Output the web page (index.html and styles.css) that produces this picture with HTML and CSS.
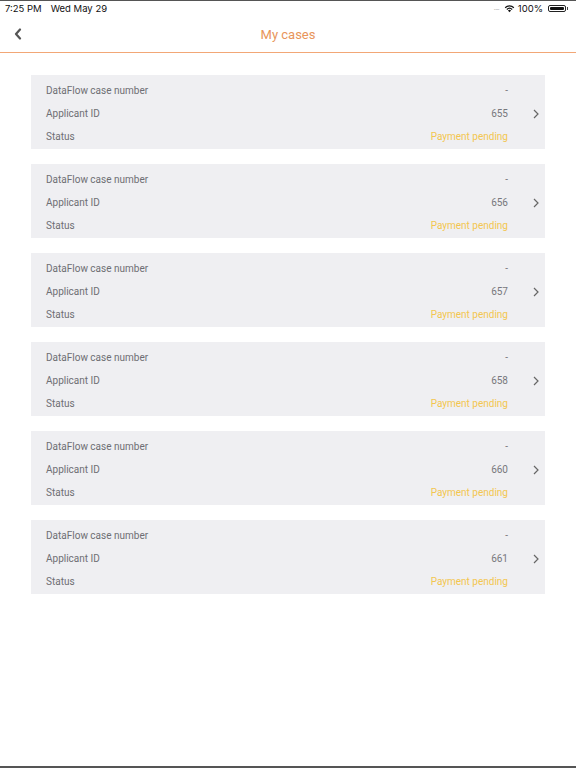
FILE: index.html
```html
<!DOCTYPE html>
<html>
<head>
<meta charset="utf-8">
<link rel="stylesheet" href="styles.css">
</head>
<body>
<div class="screen">
  <div class="statusbar">
    <div class="sb-left"><span>7:25 PM</span><span>Wed May 29</span></div>
    <div class="sb-right">
      <span class="dots">····</span>
      <svg class="wifi" width="11" height="9" viewBox="0 0 12 9"><path d="M6 8.6L4.3 6.7a2.5 2.5 0 0 1 3.4 0z" fill="#111"/><path d="M2.6 5a4.9 4.9 0 0 1 6.8 0l-0.9 1a3.6 3.6 0 0 0-5 0z" fill="#111"/><path d="M0.8 3.1a7.5 7.5 0 0 1 10.4 0l-0.9 1a6.2 6.2 0 0 0-8.6 0z" fill="#111"/></svg>
      <span>100%</span>
      <span class="battery"><span class="fill"></span></span><span class="nub"></span>
    </div>
  </div>
  <div class="navbar">
    <svg class="back" width="8" height="12" viewBox="0 0 8 12"><path d="M6 1.5L2 6l4 4.5" fill="none" stroke="#555" stroke-width="2.2" stroke-linecap="round" stroke-linejoin="round"/></svg>
    <div class="title">My cases</div>
  </div>
  <div class="list">
    <div class="card"><div class="rows"><div class="row"><span>DataFlow case number</span><span class="val">-</span></div><div class="row"><span>Applicant ID</span><span class="val">655</span></div><div class="row"><span>Status</span><span class="status">Payment pending</span></div></div><div class="chev"><svg width="6" height="10" viewBox="0 0 6 10"><path d="M1 1l4 4-4 4" fill="none" stroke="#666" stroke-width="1.2"/></svg></div></div>
    <div class="card"><div class="rows"><div class="row"><span>DataFlow case number</span><span class="val">-</span></div><div class="row"><span>Applicant ID</span><span class="val">656</span></div><div class="row"><span>Status</span><span class="status">Payment pending</span></div></div><div class="chev"><svg width="6" height="10" viewBox="0 0 6 10"><path d="M1 1l4 4-4 4" fill="none" stroke="#666" stroke-width="1.2"/></svg></div></div>
    <div class="card"><div class="rows"><div class="row"><span>DataFlow case number</span><span class="val">-</span></div><div class="row"><span>Applicant ID</span><span class="val">657</span></div><div class="row"><span>Status</span><span class="status">Payment pending</span></div></div><div class="chev"><svg width="6" height="10" viewBox="0 0 6 10"><path d="M1 1l4 4-4 4" fill="none" stroke="#666" stroke-width="1.2"/></svg></div></div>
    <div class="card"><div class="rows"><div class="row"><span>DataFlow case number</span><span class="val">-</span></div><div class="row"><span>Applicant ID</span><span class="val">658</span></div><div class="row"><span>Status</span><span class="status">Payment pending</span></div></div><div class="chev"><svg width="6" height="10" viewBox="0 0 6 10"><path d="M1 1l4 4-4 4" fill="none" stroke="#666" stroke-width="1.2"/></svg></div></div>
    <div class="card"><div class="rows"><div class="row"><span>DataFlow case number</span><span class="val">-</span></div><div class="row"><span>Applicant ID</span><span class="val">660</span></div><div class="row"><span>Status</span><span class="status">Payment pending</span></div></div><div class="chev"><svg width="6" height="10" viewBox="0 0 6 10"><path d="M1 1l4 4-4 4" fill="none" stroke="#666" stroke-width="1.2"/></svg></div></div>
    <div class="card"><div class="rows"><div class="row"><span>DataFlow case number</span><span class="val">-</span></div><div class="row"><span>Applicant ID</span><span class="val">661</span></div><div class="row"><span>Status</span><span class="status">Payment pending</span></div></div><div class="chev"><svg width="6" height="10" viewBox="0 0 6 10"><path d="M1 1l4 4-4 4" fill="none" stroke="#666" stroke-width="1.2"/></svg></div></div>
  </div>
  <div class="spacer"></div>
</div>
</body>
</html>
```

FILE: styles.css
```css
html, body {
  margin: 0;
  padding: 0;
  background: #fff;
}
.screen {
  width: 576px;
  height: 768px;
  box-sizing: border-box;
  border-top: 1px solid #555;
  border-bottom: 2px solid #555;
  display: flex;
  flex-direction: column;
  font-family: "Roboto", "Liberation Sans", sans-serif;
  background: #fff;
}
.statusbar {
  height: 15px;
  display: flex;
  justify-content: space-between;
  align-items: center;
  padding: 0 8px 0 5px;
  font-size: 9.5px;
  color: #111;
  font-family: "Inter", "Liberation Sans", sans-serif;
}
.sb-left {
  display: flex;
  gap: 9px;
}
.sb-right {
  display: flex;
  align-items: center;
  gap: 3px;
}
.dots {
  color: #bbb;
  font-size: 8px;
  letter-spacing: -1px;
  margin-right: 2px;
}
.battery {
  width: 18px;
  height: 7px;
  border: 1px solid #222;
  border-radius: 2px;
  box-sizing: border-box;
  padding: 1px;
  display: flex;
  margin-left: 2px;
}
.fill {
  flex: 1;
  background: #111;
  border-radius: 1px;
}
.nub {
  width: 1px;
  height: 3px;
  background: #444;
  margin-left: -2px;
}
.navbar {
  height: 36px;
  border-bottom: 1px solid #f2a776;
  display: flex;
  align-items: center;
  justify-content: center;
  position: relative;
}
.back {
  position: absolute;
  left: 14px;
  top: 12px;
}
.title {
  color: #e8955a;
  font-size: 13px;
}
.list {
  display: flex;
  flex-direction: column;
  gap: 15px;
  padding: 22px 31px 0 31px;
}
.card {
  background: #efeff2;
  display: flex;
  align-items: center;
  height: 74px;
  box-sizing: border-box;
  padding: 4px 0 1px 15px;
}
.rows {
  flex: 1;
  display: flex;
  flex-direction: column;
}
.row {
  height: 23px;
  display: flex;
  justify-content: space-between;
  align-items: center;
  font-size: 10px;
  color: #6e6e73;
}
.val {
  color: #77777c;
}
.status {
  color: #f3c64f;
}
.chev {
  width: 37px;
  display: flex;
  justify-content: flex-start;
  padding-left: 25px;
  box-sizing: border-box;
}
.spacer {
  flex: 1;
}
```
